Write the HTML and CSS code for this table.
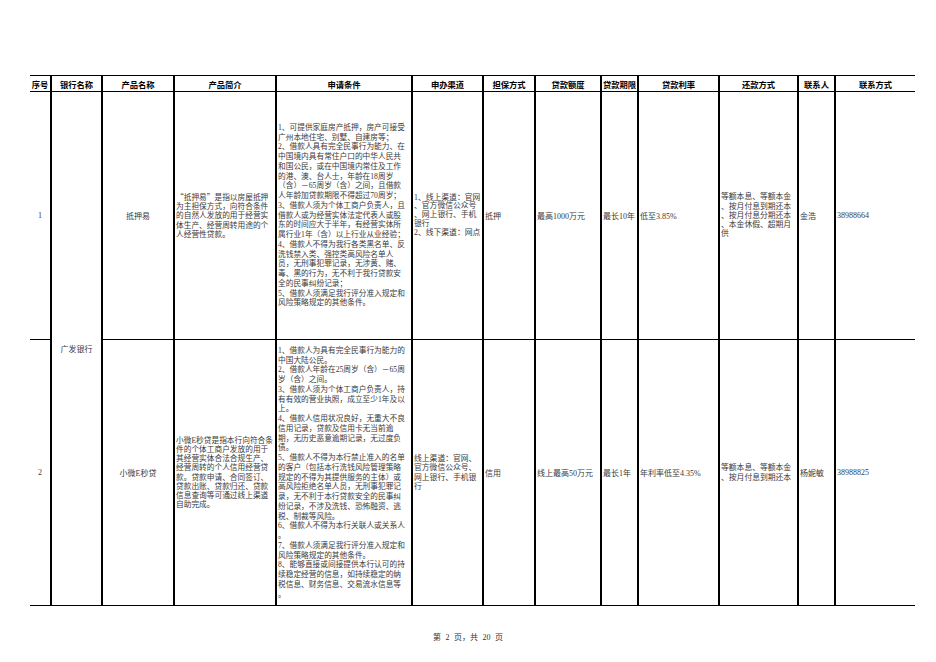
FILE: index.html
```html
<!DOCTYPE html>
<html lang="zh-CN">
<head>
<meta charset="utf-8">
<title>广发银行 产品</title>
<link rel="stylesheet" href="styles.css">
</head>
<body>
<div class="page">
<table class="sheet">
<colgroup>
<col class="w-no"><col class="w-bank"><col class="w-pname"><col class="w-intro"><col class="w-cond"><col class="w-chan"><col class="w-guar"><col class="w-amt"><col class="w-term"><col class="w-rate"><col class="w-repay"><col class="w-person"><col class="w-phone">
</colgroup>
<thead>
<tr class="head">
<th>序号</th><th>银行名称</th><th>产品名称</th><th>产品简介</th><th>申请条件</th><th>申办渠道</th><th>担保方式</th><th>贷款额度</th><th>贷款期限</th><th>贷款利率</th><th>还款方式</th><th>联系人</th><th>联系方式</th>
</tr>
</thead>
<tbody>
<tr class="r1">
<td class="ctr">1</td>
<td class="ctr" rowspan="2">广发银行</td>
<td class="ctr">抵押易</td>
<td class="intro"><span class="ln"><span class="q">“</span>抵押易<span class="q">”</span>是指以房屋抵押</span><span class="ln">为主担保方式，向符合条件</span><span class="ln">的自然人发放的用于经营实</span><span class="ln">体生产、经营周转用途的个</span><span class="ln">人经营性贷款。</span></td>
<td class="cond"><span class="ln">1、可提供家庭房产抵押，房产可接受</span><span class="ln">广州本地住宅、别墅、自建房等；</span><span class="ln">2、借款人具有完全民事行为能力、在</span><span class="ln">中国境内具有常住户口的中华人民共</span><span class="ln">和国公民，或在中国境内常住及工作</span><span class="ln">的港、澳、台人士，年龄在18周岁</span><span class="ln">（含）－65周岁（含）之间，且借款</span><span class="ln">人年龄加贷款期限不得超过70周岁；</span><span class="ln">3、借款人须为个体工商户负责人，且</span><span class="ln">借款人或为经营实体法定代表人或股</span><span class="ln">东的时间应大于半年，有经营实体所</span><span class="ln">属行业1年（含）以上行业从业经验；</span><span class="ln">4、借款人不得为我行各类黑名单、反</span><span class="ln">洗钱禁入类、强控类高风险名单人</span><span class="ln">员，无刑事犯罪记录，无涉黄、赌、</span><span class="ln">毒、黑的行为，无不利于我行贷款安</span><span class="ln">全的民事纠纷记录；</span><span class="ln">5、借款人须满足我行评分准入规定和</span><span class="ln">风险策略规定的其他条件。</span></td>
<td class="chan chan1"><span class="ln">1、线上渠道：官网</span><span class="ln">、官方微信公众号</span><span class="ln">、网上银行、手机</span><span class="ln">银行</span><span class="ln">2、线下渠道：网点</span></td>
<td class="txt">抵押</td>
<td class="txt">最高1000万元</td>
<td class="txt">最长10年</td>
<td class="txt">低至3.85%</td>
<td class="repay"><span class="ln">等额本息、等额本金</span><span class="ln">、按月付息到期还本</span><span class="ln">、按月付息分期还本</span><span class="ln">、本金休假、超期月</span><span class="ln">供</span></td>
<td class="txt">金浩</td>
<td class="txt">38988664</td>
</tr>
<tr class="r2">
<td class="ctr">2</td>
<td class="ctr">小微E秒贷</td>
<td class="intro"><span class="ln">小微E秒贷是指本行向符合条</span><span class="ln">件的个体工商户发放的用于</span><span class="ln">其经营实体合法合规生产、</span><span class="ln">经营周转的个人信用经营贷</span><span class="ln">款。贷款申请、合同签订、</span><span class="ln">贷款出账、贷款归还、贷款</span><span class="ln">信息查询等可通过线上渠道</span><span class="ln">自助完成。</span></td>
<td class="cond"><span class="ln">1、借款人为具有完全民事行为能力的</span><span class="ln">中国大陆公民。</span><span class="ln">2、借款人年龄在25周岁（含）－65周</span><span class="ln">岁（含）之间。</span><span class="ln">3、借款人须为个体工商户负责人，持</span><span class="ln">有有效的营业执照，成立至少1年及以</span><span class="ln">上。</span><span class="ln">4、借款人信用状况良好，无重大不良</span><span class="ln">信用记录，贷款及信用卡无当前逾</span><span class="ln">期，无历史恶意逾期记录，无过度负</span><span class="ln">债。</span><span class="ln">5、借款人不得为本行禁止准入的名单</span><span class="ln">的客户（包括本行洗钱风险管理策略</span><span class="ln">规定的不得为其提供服务的主体）或</span><span class="ln">高风险拒绝名单人员，无刑事犯罪记</span><span class="ln">录，无不利于本行贷款安全的民事纠</span><span class="ln">纷记录，不涉及洗钱、恐怖融资、逃</span><span class="ln">税、制裁等风险。</span><span class="ln">6、借款人不得为本行关联人或关系人</span><span class="ln">。</span><span class="ln">7、借款人须满足我行评分准入规定和</span><span class="ln">风险策略规定的其他条件。</span><span class="ln">8、能够直接或间接提供本行认可的持</span><span class="ln">续稳定经营的信息，如持续稳定的纳</span><span class="ln">税信息、财务信息、交易流水信息等</span><span class="ln">。</span></td>
<td class="chan"><span class="ln">线上渠道：官网、</span><span class="ln">官方微信公众号、</span><span class="ln">网上银行、手机银</span><span class="ln">行</span></td>
<td class="txt">信用</td>
<td class="txt">线上最高50万元</td>
<td class="txt">最长1年</td>
<td class="txt">年利率低至4.35%</td>
<td class="repay"><span class="ln">等额本息、等额本金</span><span class="ln">、按月付息到期还本</span></td>
<td class="txt">杨妮敏</td>
<td class="txt">38988825</td>
</tr>
</tbody>
</table>
</div>
<div class="foot">第 2 页，共 20 页</div>
</body>
</html>
```

FILE: styles.css
```css
html, body {
  margin: 0;
  padding: 0;
  background: #ffffff;
}

.page {
  padding: 75px 0 0 30px;
}

.sheet {
  border-collapse: collapse;
  table-layout: fixed;
  width: 885px;
  font-family: "Liberation Serif", "Noto Sans CJK SC", serif;
  color: #3a3a3a;
  font-size: 8px;
}

.w-no { width: 21px; }
.w-bank { width: 51px; }
.w-pname { width: 72px; }
.w-intro { width: 102px; }
.w-cond { width: 136px; }
.w-chan { width: 71px; }
.w-guar { width: 52px; }
.w-amt { width: 66px; }
.w-term { width: 37px; }
.w-rate { width: 81px; }
.w-repay { width: 79px; }
.w-person { width: 37px; }
.w-phone { width: 80px; }

.sheet th,
.sheet td {
  border-left: 2px solid #000;
  vertical-align: middle;
  text-align: left;
  padding: 0 0 0 1px;
  white-space: nowrap;
  overflow: hidden;
}

.sheet th:first-child,
.sheet td:first-child {
  border-left: none;
}

.sheet tr {
  border-bottom: 1px solid #000;
}

.sheet thead tr {
  border-top: 1px solid #000;
}

.head {
  height: 16px;
}

.head th {
  font-family: "Noto Sans CJK SC", sans-serif;
  font-weight: 700;
  font-size: 8.3px;
  color: #000;
  text-align: center;
  padding: 0;
  line-height: 14px;
}

.r1 { height: 248px; }
.r2 { height: 266px; }

.ln {
  display: block;
}

.q {
  font-family: "Noto Sans CJK SC", sans-serif;
}

.sheet td.ctr {
  text-align: center;
  padding: 0;
}

.intro {
  font-size: 7.7px;
  line-height: 9.1px;
}

.cond {
  font-size: 7.7px;
  line-height: 9.75px;
}

.chan {
  font-size: 7.8px;
  line-height: 9.3px;
}

.chan1 {
  line-height: 8.8px;
}

.repay {
  font-size: 7.8px;
  line-height: 9.3px;
}

.txt {
  color: #3a3a3a;
}

.foot {
  margin-top: 27px;
  text-align: center;
  font-family: "Liberation Serif", "Noto Sans CJK SC", serif;
  font-size: 8px;
  line-height: 10px;
  word-spacing: 2.5px;
  color: #333;
}
```
